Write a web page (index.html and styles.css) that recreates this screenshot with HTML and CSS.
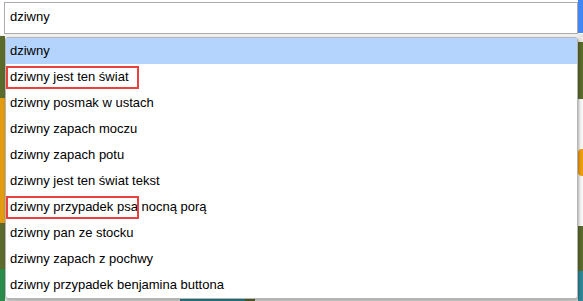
FILE: index.html
```html
<!DOCTYPE html>
<html lang="pl">
<head>
    <meta charset="UTF-8">
    <meta name="viewport" content="width=device-width, initial-scale=1.0">
    <title>dziwny</title>
    <link rel="stylesheet" href="styles.css">
</head>
<body>
  <div class="page">
    <!-- pasek wyszukiwania -->
    <div class="topbar">
      <div class="search-box">dziwny</div>
      <div class="top-accent"></div>
    </div>

    <!-- strona pod listą podpowiedzi -->
    <div class="backdrop">
      <div class="strip strip-left">
        <div class="blk olive" style="height: 62px"></div>
        <div class="blk orange" style="height: 125px"></div>
        <div class="blk olive" style="height: 46px"></div>
        <div class="blk green" style="height: 33px"></div>
      </div>
      <div class="middle">
        <div class="bottom-row">
          <div class="blk teal" style="width: 65px"></div>
          <div class="blk olive" style="width: 10px"></div>
        </div>
      </div>
      <div class="strip strip-right">
        <div class="blk pale" style="height: 8px"></div>
        <div class="blk olive" style="height: 57px"></div>
        <div class="blk light">
          <span class="dot"></span>
        </div>
        <div class="blk olive" style="height: 45px"></div>
        <div class="blk teal" style="height: 31px"></div>
      </div>
    </div>
  </div>

  <!-- lista podpowiedzi -->
  <ul class="suggest">
    <li class="active">dziwny</li>
    <li>dziwny jest ten świat<span class="mark"></span></li>
    <li>dziwny posmak w ustach</li>
    <li>dziwny zapach moczu</li>
    <li>dziwny zapach potu</li>
    <li>dziwny jest ten świat tekst</li>
    <li>dziwny przypadek psa nocną porą<span class="mark"></span></li>
    <li>dziwny pan ze stocku</li>
    <li>dziwny zapach z pochwy</li>
    <li>dziwny przypadek benjamina buttona</li>
  </ul>
</body>
</html>
```

FILE: styles.css
```css
/* ogólne */
* {
    box-sizing: border-box;
}

body {
    margin: 0;
    padding: 0;
    font-family: 'Liberation Sans', Arial, sans-serif;
    font-size: 13px;
    color: #000;
    background: #f1f1ef;
    overflow: hidden;
}

.page {
    width: 583px;
    height: 301px;
    display: flex;
    flex-direction: column;
}

/* pasek wyszukiwania */
.topbar {
    display: flex;
    height: 35px;
    background: #fff;
}

.search-box {
    margin: 2px 0 0 4px;
    width: 574px;
    height: 32px;
    border: 1px solid #ababab;
    background: #fff;
    padding-left: 5px;
    line-height: 28px;
}

.top-accent {
    margin-left: auto;
    width: 5px;
    height: 33px;
    background: #4285f4;
}

/* tło strony */
.backdrop {
    flex: 1;
    display: flex;
    background: #efefec;
}

.strip {
    width: 5px;
    display: flex;
    flex-direction: column;
}

.strip-left {
    padding-top: 2px;
    background: #f4f4f4;
}

.middle {
    flex: 1;
    display: flex;
    flex-direction: column;
    justify-content: flex-end;
}

.bottom-row {
    display: flex;
    height: 4px;
    padding-left: 175px;
}

.blk.olive {
    background: #5b6b2c;
}

.blk.orange {
    background: #e39b12;
}

.blk.green {
    background: #2a8c4a;
}

.blk.teal {
    background: #2e8797;
}

.blk.pale {
    background: #e6e6e2;
}

.blk.light {
    flex: 1;
    background: #f7f7f7;
    padding-top: 50px;
}

.dot {
    display: block;
    width: 5px;
    height: 27px;
    background: #ef9d10;
    border-radius: 4px 0 0 4px;
}

/* lista podpowiedzi */
.suggest {
    position: absolute;
    top: 37px;
    left: 5px;
    width: 573px;
    height: 262px;
    margin: 0;
    padding: 0;
    list-style: none;
    background: #fff;
    border: 1px solid #b5b5b5;
    border-radius: 3px;
    box-shadow: 1px 2px 3px rgba(0, 0, 0, 0.3);
}

.suggest li {
    position: relative;
    height: 26px;
    line-height: 25px;
    padding-left: 4px;
    white-space: nowrap;
}

.suggest li.active {
    background: #b4d4fd;
}

/* czerwone zaznaczenie */
.mark {
    position: absolute;
    left: 0;
    top: 2px;
    width: 133px;
    height: 23px;
    border: 2px solid #e8413f;
}
```
